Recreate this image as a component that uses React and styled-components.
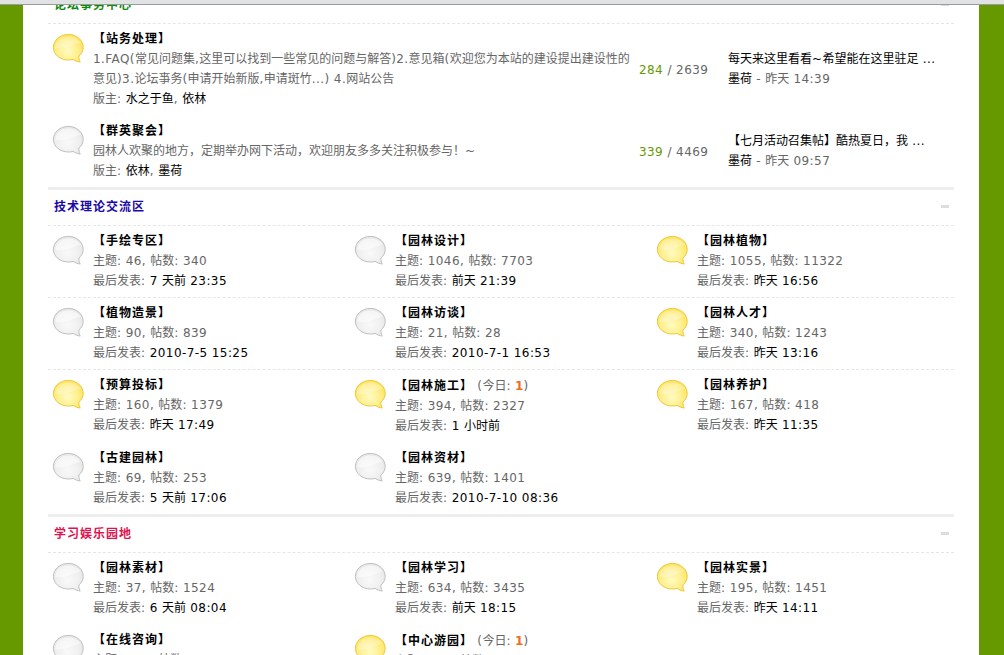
import { Fragment } from "react";
import styled, { createGlobalStyle } from "styled-components";

const sections = [
  {
    title: "技术理论交流区",
    color: "#1a0aa6",
    rows: [
      {
        ruled: true,
        forums: [
          { name: "手绘专区", topics: 46, posts: 340, last: "7 天前 23:35" },
          { name: "园林设计", topics: 1046, posts: 7703, last: "前天 21:39" },
          { name: "园林植物", topics: 1055, posts: 11322, last: "昨天 16:56", fresh: true },
        ],
      },
      {
        ruled: true,
        forums: [
          { name: "植物造景", topics: 90, posts: 839, last: "2010-7-5 15:25" },
          { name: "园林访谈", topics: 21, posts: 28, last: "2010-7-1 16:53" },
          { name: "园林人才", topics: 340, posts: 1243, last: "昨天 13:16", fresh: true },
        ],
      },
      {
        ruled: true,
        forums: [
          { name: "预算投标", topics: 160, posts: 1379, last: "昨天 17:49", fresh: true },
          { name: "园林施工", topics: 394, posts: 2327, last: "1 小时前", today: 1, fresh: true },
          { name: "园林养护", topics: 167, posts: 418, last: "昨天 11:35", fresh: true },
        ],
      },
      {
        forums: [
          { name: "古建园林", topics: 69, posts: 253, last: "5 天前 17:06" },
          { name: "园林资材", topics: 639, posts: 1401, last: "2010-7-10 08:36" },
        ],
      },
    ],
  },
  {
    title: "学习娱乐园地",
    color: "#dc1450",
    rows: [
      {
        ruled: true,
        forums: [
          { name: "园林素材", topics: 37, posts: 1524, last: "6 天前 08:04" },
          { name: "园林学习", topics: 634, posts: 3435, last: "前天 18:15" },
          { name: "园林实景", topics: 195, posts: 1451, last: "昨天 14:11", fresh: true },
        ],
      },
      {
        forums: [
          { name: "在线咨询", topics: 260, posts: 1127, last: "昨天 10:20" },
          { name: "中心游园", topics: 512, posts: 4310, last: "2 小时前", today: 1, fresh: true },
        ],
      },
    ],
  },
];

// Latin runs are tracked a little wider than the CJK text around them
const Text = ({ children }) =>
  String(children)
    .split(/([\x20-\x7e]+)/)
    .map((part, i) =>
      i % 2 ? <Latin key={i}>{part}</Latin> : <Fragment key={i}>{part}</Fragment>
    );

const Bubble = ({ fresh }) => {
  const id = fresh ? "bubble-new" : "bubble-old";
  return (
    <BubbleIcon viewBox="-0.6 -0.4 32 30">
      <defs>
        <radialGradient id={id} cx="0.48" cy="0.6" r="0.6">
          <stop offset="0" stopColor={fresh ? "#fffbc4" : "#f9f9f9"} />
          <stop offset="0.6" stopColor={fresh ? "#ffef8c" : "#f0f0f0"} />
          <stop offset="1" stopColor={fresh ? "#ffe252" : "#e6e6e6"} />
        </radialGradient>
      </defs>
      <path
        d="M15.8 1C24 1 30.6 6.8 30.6 14C30.6 17.4 29 20.4 26.3 22.6C26.1 24.8 26.7 26.8 27.6 28.7C25 28.2 22.5 27.4 20.5 26C19 26.4 17.4 26.6 15.8 26.6C7.4 26.6 0.8 21 0.8 14C0.8 6.8 7.4 1 15.8 1Z"
        fill={`url(#${id})`}
        stroke={fresh ? "#ecc840" : "#bfbfbf"}
        strokeWidth="1"
      />
      <path
        d="M2.8 14.5C2.6 7.5 8.3 3 15.8 3C21.8 3 26.3 5.7 28 9.5C22 9.5 18 15.5 2.8 14.5Z"
        fill="#fff"
        opacity={fresh ? 0.3 : 0.5}
      />
    </BubbleIcon>
  );
};

const SectionHeader = ({ title, color }) => (
  <Header color={color}>
    <h2>{title}</h2>
    <Collapse />
  </Header>
);

const Forum = ({ forum }) => (
  <ForumCell>
    <Bubble fresh={forum.fresh} />
    <Info>
      <Line $tall={forum.today}>
        <Name>【{forum.name}】</Name>
        {forum.today && (
          <>
            <Text> (今日: </Text>
            <Today>{forum.today}</Today>
            <Text>)</Text>
          </>
        )}
      </Line>
      <Line>
        <Text>{`主题: ${forum.topics}, 帖数: ${forum.posts}`}</Text>
      </Line>
      <Line>
        <Text>最后发表: </Text>
        <Link>
          <Text>{forum.last}</Text>
        </Link>
      </Line>
    </Info>
  </ForumCell>
);

const WideForum = ({ name, fresh, lines, moderators, topics, posts, subject, author, time }) => (
  <WideRow $ruled={fresh}>
    <Bubble fresh={fresh} />
    <Info>
      <Line>
        <Name>【{name}】</Name>
      </Line>
      {lines.map((line) => (
        <Line key={line}>
          <Text>{line}</Text>
        </Line>
      ))}
      <Line>
        <Text>版主: </Text>
        <Link>{moderators[0]}</Link>
        <Text>, </Text>
        <Link>{moderators[1]}</Link>
      </Line>
    </Info>
    <Stats>
      <em>
        <Text>{topics}</Text>
      </em>
      <Text>{` / ${posts}`}</Text>
    </Stats>
    <LastPost>
      <Line>
        <Link>
          <Text>{subject}</Text>
        </Link>
      </Line>
      <Line>
        <Link>{author}</Link>
        <Text>{` - ${time}`}</Text>
      </Line>
    </LastPost>
  </WideRow>
);

const App = () => {
  return (
    <Screen>
      <GlobalStyle />
      <TopBar />
      <Viewport>
        <Board>
          <Section>
            <SectionHeader title="论坛亊务中心" color="#0c8a0c" />
            <WideForum
              name="站务处理"
              fresh
              lines={[
                "1.FAQ(常见问题集,这里可以找到一些常见的问题与解答)2.意见箱(欢迎您为本站的建设提出建设性的",
                "意见)3.论坛亊务(申请开始新版,申请斑竹...) 4.网站公告",
              ]}
              moderators={["水之于鱼", "依林"]}
              topics={284}
              posts={2639}
              subject="每天来这里看看~希望能在这里驻足 ..."
              author="墨荷"
              time="昨天 14:39"
            />
            <WideForum
              name="群英聚会"
              lines={["园林人欢聚的地方，定期举办网下活动，欢迎朋友多多关注积极参与！~"]}
              moderators={["依林", "墨荷"]}
              topics={339}
              posts={4469}
              subject="【七月活动召集帖】酷热夏日，我 ..."
              author="墨荷"
              time="昨天 09:57"
            />
          </Section>
          {sections.map((section) => (
            <Section key={section.title}>
              <SectionHeader title={section.title} color={section.color} />
              {section.rows.map((row, i) => (
                <Row key={i} $ruled={row.ruled}>
                  {row.forums.map((forum) => (
                    <Forum key={forum.name} forum={forum} />
                  ))}
                </Row>
              ))}
            </Section>
          ))}
        </Board>
      </Viewport>
    </Screen>
  );
};

export default App;

const GlobalStyle = createGlobalStyle`
  * {
    box-sizing: border-box;
  }

  body {
    margin: 0;
    overflow: hidden;
    background-color: #690;
    color: #666;
    font-family: "DejaVu Sans", "Noto Sans CJK SC", sans-serif;
    font-size: 12px;
    line-height: 20px;
  }
`;

const Screen = styled.div`
  height: 655px;
  overflow: hidden;
  display: flex;
  flex-direction: column;
`;

const TopBar = styled.div`
  flex: none;
  height: 5px;
  background-color: #e1e2e3;
  border-bottom: 1px solid #999b9d;
`;

const Viewport = styled.div`
  flex: 1;
  min-height: 0;
  overflow: hidden;
  width: 956px;
  margin-left: 23px;
  background-color: #fff;
`;

const Board = styled.div`
  margin: -17px 25px 0;
`;

const Section = styled.section`
  & + & {
    border-top: 3px solid #eee;
  }
`;

const Header = styled.div`
  height: 35px;
  padding: 0 5px 1px 6px;
  display: flex;
  align-items: center;
  justify-content: space-between;

  h2 {
    margin: 0;
    color: ${({ color }) => color};
    font-size: 12px;
    font-weight: 700;
    letter-spacing: 1px;
  }
`;

const Collapse = styled.span`
  width: 8px;
  height: 3px;
  margin-bottom: 2px;
  background-color: #ddd;
`;

const Row = styled.div`
  display: grid;
  grid-template-columns: repeat(3, 302px);
  height: 72px;
  border-top: 1px dashed ${({ $ruled }) => ($ruled ? "#e6e6e6" : "transparent")};

  &:nth-child(4) {
    height: 73px;
  }
`;

const ForumCell = styled.div`
  display: flex;
  padding: 5px 0 0 4px;
`;

const WideRow = styled.div`
  display: flex;
  padding: 5px 0 6px 4px;
  border-top: 1px dashed ${({ $ruled }) => ($ruled ? "#e6e6e6" : "transparent")};
`;

const BubbleIcon = styled.svg`
  flex: none;
  width: 32px;
  height: 30px;
  margin: 4px 9px 0 0;
  overflow: visible;
`;

const Info = styled.div`
  width: 546px;
`;

const Line = styled.div`
  height: ${({ $tall }) => ($tall ? 21 : 20)}px;
  line-height: ${({ $tall }) => ($tall ? 22 : 20)}px;
  white-space: pre;
`;

const Latin = styled.span`
  letter-spacing: 0.42px;
`;

const Name = styled.strong`
  color: #000;
  letter-spacing: 1px;
`;

const Link = styled.span`
  color: #000;
`;

const Today = styled.strong`
  color: #f26c1f;
`;

const Stats = styled.div`
  align-self: center;
  width: 89px;
  padding-top: 1px;
  white-space: pre;

  em {
    color: #690;
    font-style: normal;
  }
`;

const LastPost = styled.div`
  align-self: center;
`;
